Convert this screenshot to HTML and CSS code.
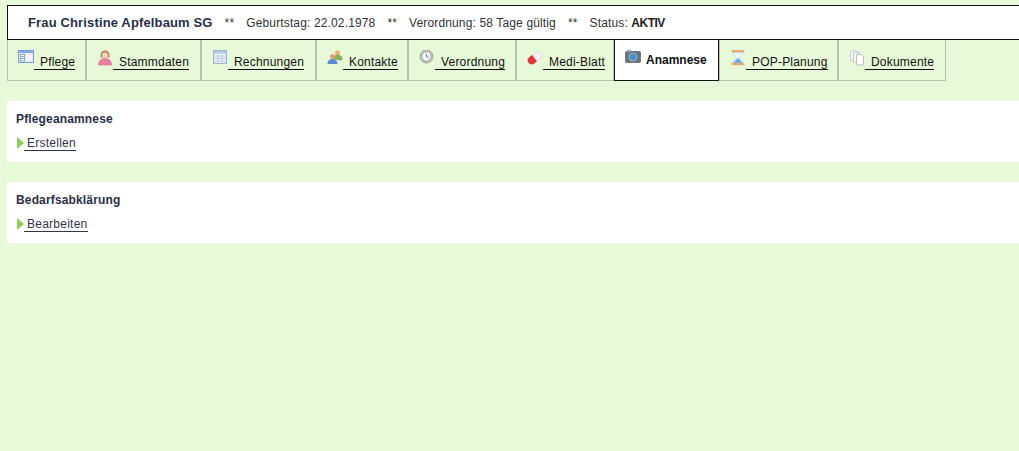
FILE: index.html
```html
<!DOCTYPE html>
<html lang="de">
<head>
  <meta charset="UTF-8" />
  <title>Anamnese</title>
  <link rel="stylesheet" href="styles.css">
</head>
<body>
  <div class="patient-bar">
    <span class="patient-name">Frau Christine Apfelbaum SG</span>
    <span class="stars">**</span>
    <span>Geburtstag: 22.02.1978</span>
    <span class="stars">**</span>
    <span>Verordnung: 58 Tage gültig</span>
    <span class="stars">**</span>
    <span>Status: <b>AKTIV</b></span>
  </div>

  <div class="tabs">
    <a class="tab tab-pflege" href="#">
      <svg class="icon" viewBox="0 0 16 16"><rect x="0.500" y="0.500" width="15" height="12" fill="#dfeafa" stroke="#7f9fd0"/><rect x="1" y="1" width="14" height="2" fill="#86a9e0"/><rect x="2.500" y="4.500" width="4" height="6.500" fill="#fff" stroke="#8fa6c8"/><path d="M3 6.500h3M3 8.500h3" stroke="#8fa6c8"/><rect x="8" y="4" width="6" height="7" fill="#f2f6fc"/></svg>
      <span class="tab-label">Pflege</span>
    </a>
    <a class="tab tab-stamm" href="#">
      <svg class="icon" viewBox="0 0 16 16"><path d="M3.500 7.500C3 2 5.500.5 8 .5s5 1.500 4.500 7z" fill="#b08a5c"/><circle cx="8" cy="5.500" r="3" fill="#f8d3bc"/><path d="M1.500 15c0-4 2.500-6.500 6.500-6.500s6.500 2.500 6.500 6.500z" fill="#ef7f9f" stroke="#d0708c" stroke-width=".6"/></svg>
      <span class="tab-label">Stammdaten</span>
    </a>
    <a class="tab tab-rechnung" href="#">
      <svg class="icon" viewBox="0 0 16 16"><rect x="1.500" y="0.500" width="13" height="13" fill="#eef4fb" stroke="#9db4d2"/><rect x="2" y="1" width="12" height="2.500" fill="#b4cbe8"/><path d="M2 6h12M2 8.500h12M2 11h12M6 4v9M10 4v9" stroke="#b3c4da" stroke-width=".8"/></svg>
      <span class="tab-label">Rechnungen</span>
    </a>
    <a class="tab tab-kontakte" href="#">
      <svg class="icon" viewBox="0 0 16 16"><circle cx="10.500" cy="2.800" r="2.500" fill="#e5b56e"/><path d="M6.500 9c0-3 2-4.500 4-4.500s5 1.500 5 4.500c0 1-2 1.500-3 1.500z" fill="#86b35a"/><circle cx="5.500" cy="6.500" r="2.500" fill="#e39c7c"/><path d="M.5 14c0-3.500 2-5 5-5s5 1.500 5 5z" fill="#5a8fcf"/></svg>
      <span class="tab-label">Kontakte</span>
    </a>
    <a class="tab tab-verordnung" href="#">
      <svg class="icon" viewBox="0 0 16 16"><circle cx="7.500" cy="6.500" r="6.500" fill="#c9c0ae" stroke="#a69d8b" stroke-width=".8"/><circle cx="7.500" cy="6.500" r="4.500" fill="#f3f7fc" stroke="#93add2" stroke-width=".8"/><path d="M7.500 4v2.500l2 1" fill="none" stroke="#5b77a6"/></svg>
      <span class="tab-label">Verordnung</span>
    </a>
    <a class="tab tab-medi" href="#">
      <svg class="icon" viewBox="0 0 16 16"><g transform="rotate(-38 8 8)"><rect x="0" y="3.800" width="16" height="8" rx="4" fill="#f4f0f0" stroke="#d3cbcb" stroke-width=".5"/><path d="M4 3.800h3.500v8H4a4 4 0 0 1 0-8z" fill="#e2343c"/></g></svg>
      <span class="tab-label">Medi-Blatt</span>
    </a>
    <a class="tab tab-anamnese active" href="#">
      <svg class="icon" viewBox="0 0 16 16"><rect x="0.500" y="1.500" width="15" height="11" rx="1" fill="#6a7380" stroke="#474d57" stroke-width=".6"/><rect x="2" y="0" width="4" height="2" fill="#98a0aa"/><circle cx="8" cy="7" r="4" fill="#4d8fc8" stroke="#b3c0cc" stroke-width=".8"/></svg>
      <span class="tab-label">Anamnese</span>
    </a>
    <a class="tab tab-pop" href="#">
      <svg class="icon" viewBox="0 0 16 16"><path d="M3 2h10c0 3-3 4-4 5.500 1 1.500 4 2.500 4 5.500H3c0-3 3-4 4-5.500C6 6 3 5 3 2z" fill="#eef6fc" stroke="#b4cce0" stroke-width=".6"/><path d="M3.800 13c.6-2.500 3-3.500 4.200-5 1.200 1.500 3.600 2.500 4.200 5z" fill="#66abe6"/><rect x="1.500" y="0" width="13" height="2.500" rx="1" fill="#dcae82"/><rect x="1.500" y="12.800" width="13" height="2.500" rx="1" fill="#dcae82"/></svg>
      <span class="tab-label">POP-Planung</span>
    </a>
    <a class="tab tab-dokumente" href="#">
      <svg class="icon" viewBox="0 0 16 16"><path d="M1.500.5h6v10h-6z" fill="#f2f2f2" stroke="#cfcfcf"/><path d="M4.500 2.500h6v10h-6z" fill="#f6f6f6" stroke="#c8c8c8"/><path d="M7.500 4.500h4.500l2.500 2.500v8h-7z" fill="#fff" stroke="#bebebe"/></svg>
      <span class="tab-label">Dokumente</span>
    </a>
  </div>

  <div class="panel">
    <h3>Pflegeanamnese</h3>
    <a class="action" href="#"><svg class="arrow" viewBox="0 0 7 12"><path d="M0 0l7 6-7 6z" fill="#8fce5a"/></svg><span class="action-label">Erstellen</span></a>
  </div>

  <div class="panel">
    <h3>Bedarfsabklärung</h3>
    <a class="action" href="#"><svg class="arrow" viewBox="0 0 7 12"><path d="M0 0l7 6-7 6z" fill="#8fce5a"/></svg><span class="action-label">Bearbeiten</span></a>
  </div>
</body>
</html>
```

FILE: styles.css
```css
html, body { height: 100%; }
body { margin: 0; padding: 5px 0 0 7px; box-sizing: border-box; overflow: hidden; background-color: #e8f9d9; font-family: "Liberation Sans", Arial, sans-serif; font-size: 12px; color: #333; }
.patient-bar { display: flex; align-items: center; height: 33px; padding-left: 20px; background: white; border: 1px solid #111; border-right: none; white-space: nowrap; letter-spacing: 0.14px; }
.patient-name { font-size: 13px; font-weight: bold; color: #2b2f45; letter-spacing: 0.14px; }
.patient-bar .stars { margin: 0 12px; }
.patient-bar b { color: #222; letter-spacing: -0.5px; }
.tabs { display: flex; height: 41px; }
.tab { display: flex; box-sizing: border-box; height: 41px; padding: 10px 0 0 10px; border: 1px solid #b4c4ac; border-top: none; color: #111; text-decoration: none; letter-spacing: 0.2px; }
.tab-pflege { width: 79px; }
.tab-stamm { width: 115px; }
.tab-rechnung { width: 115px; }
.tab-kontakte { width: 92px; }
.tab-verordnung { width: 108px; }
.tab-medi { width: 98px; }
.tab-anamnese { width: 105px; }
.tab-pop { width: 119px; }
.tab-dokumente { width: 108px; }
.tab.active { background: white; border: 1px solid #111; border-top: none; font-weight: bold; letter-spacing: 0; color: #111; }
.icon { width: 16px; height: 16px; flex: none; }
.tab-label { margin-top: 5px; height: 14px; padding-left: 6px; line-height: 14px; border-bottom: 1px solid #111; }
.active .tab-label { margin-top: 3px; padding-left: 5px; border-bottom: none; }
.panel { background: white; height: 61px; box-sizing: border-box; padding: 11px 0 0 9px; margin-top: 20px; }
.panel h3 { margin: 0 0 10px; font-size: 12px; line-height: 14px; color: #2b2f45; letter-spacing: 0.15px; }
.action { display: inline-flex; align-items: flex-start; color: #33364a; text-decoration: none; line-height: 14px; letter-spacing: 0.25px; }
.action-label { padding-left: 3px; height: 14px; border-bottom: 1px solid #33364a; }
.arrow { width: 7px; height: 12px; margin: 1px 0 0 1px; }
```
